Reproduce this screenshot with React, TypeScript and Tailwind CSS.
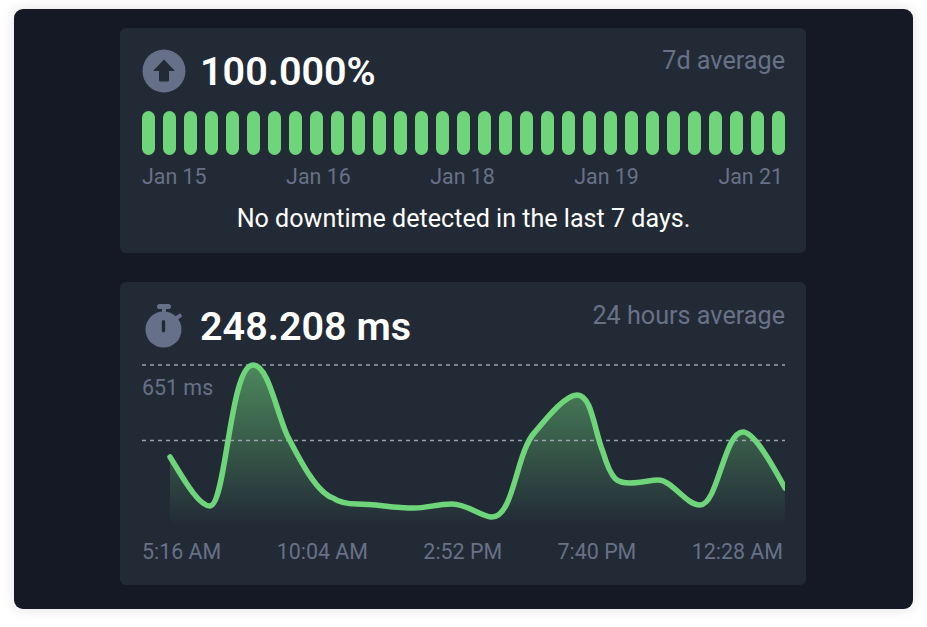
const bars = Array.from({ length: 31 }, (_, i) => i);
const days = ["Jan 15", "Jan 16", "Jan 18", "Jan 19", "Jan 21"];
const times = ["5:16 AM", "10:04 AM", "2:52 PM", "7:40 PM", "12:28 AM"];

// chart coordinates are page px minus (142, 360)
const line =
  "M28 97 C40 116 56 146 68 146 C84 146 88 5 111 5 C126 5 134 50 145 75 C158 100 174 132 191 138 C198 143 205 144 215 144 C235 144 250 148 272 148 C285 148 295 144 310 144 C325 144 340 157 350 157 C372 157 374 92 393 72 C408 54 424 35 435 35 C450 35 452 70 461 92 C470 122 476 123 488 123 C500 123 508 120 516 120 C530 120 544 145 558 145 C576 145 582 72 601 72 C612 72 630 104 643 128";
const area = `${line} L643 170 L28 170 Z`;

function UptimeIcon() {
  return (
    <svg width="44" height="44" viewBox="0 0 44 44" className="shrink-0">
      <circle cx="22" cy="22" r="21.5" fill="#667089" />
      <path d="M22 10.5 L33 22 H27 V31 Q27 32.5 25.5 32.5 H18.500 Q17 32.5 17 31 V22 H11 Z" fill="#222a36" />
    </svg>
  );
}

function StopwatchIcon() {
  return (
    <svg width="44" height="44" viewBox="0 0 44 44" className="shrink-0">
      <rect x="15" y="0" width="14" height="5" rx="2.500" fill="#667089" />
      <rect x="20" y="4" width="4" height="6" fill="#667089" />
      <rect x="33" y="11" width="7" height="4" rx="1.500" transform="rotate(-35 36 13)" fill="#667089" />
      <circle cx="21.500" cy="25.500" r="18" fill="#667089" />
      <rect x="19.800" y="16" width="3.400" height="12.500" rx="1.700" fill="#222a36" />
    </svg>
  );
}

export default function App() {
  return (
    <div className="h-[627px] w-[927px] overflow-hidden bg-white pl-[14px] pt-[9px] font-['Roboto',sans-serif]">
      <div className="flex h-[600px] w-[899px] flex-col items-center gap-[29px] rounded-[9px] bg-[#141925] pt-[19px] shadow-[0_0_14px_rgba(0,0,0,0.12)]">
        <section className="-ml-[1px] h-[225px] w-[686px] rounded-[6px] bg-[#222a36] pl-[22px] pr-[21px] pt-[21px]">
          <div className="flex h-[44px] items-center justify-between">
            <div className="flex items-center gap-[14px]">
              <UptimeIcon />
              <span className="mt-[2px] text-[39.500px] font-semibold leading-[44px] text-white">100.000%</span>
            </div>
            <span className="-mt-[20px] text-[25.200px] leading-[28px] text-[#687186]">7d average</span>
          </div>
          <div className="mt-[18px] flex h-[44px] justify-between">
            {bars.map((b) => (
              <div key={b} className="h-full w-[13px] rounded-[6.5px] bg-[#6fd57a]" />
            ))}
          </div>
          <div className="mt-[9px] flex justify-between pr-[2px] text-[21.400px] leading-[26px] text-[#687186]">
            {days.map((d) => (
              <span key={d}>{d}</span>
            ))}
          </div>
          <p className="mt-[14px] text-center text-[25.100px] leading-[30px] text-white">
            No downtime detected in the last 7 days.
          </p>
        </section>

        <section className="-ml-[1px] h-[303px] w-[686px] rounded-[6px] bg-[#222a36] pl-[22px] pr-[21px] pt-[22px]">
          <div className="flex h-[44px] items-center justify-between">
            <div className="flex items-center gap-[14px]">
              <StopwatchIcon />
              <span className="mt-[2px] text-[39.500px] font-semibold leading-[44px] text-white">248.208 ms</span>
            </div>
            <span className="-mt-[20px] text-[25.200px] leading-[28px] text-[#687186]">24 hours average</span>
          </div>
          <div className="relative mt-[12px] h-[170px] w-[643px]">
            <svg width="643" height="170" viewBox="0 0 643 170" fill="none" className="block">
              <defs>
                <linearGradient id="fade" x1="0" y1="5" x2="0" y2="166" gradientUnits="userSpaceOnUse">
                  <stop offset="0" stopColor="#6fd57a" stopOpacity="0.55" />
                  <stop offset="1" stopColor="#6fd57a" stopOpacity="0" />
                </linearGradient>
              </defs>
              <path d={area} fill="url(#fade)" />
              <path d="M0 5 H643 M0 80.500 H643" stroke="#9aa0ad" strokeWidth="1.500" strokeDasharray="4 4" />
              <path d={line} stroke="#6fd57a" strokeWidth="5.500" strokeLinecap="round" strokeLinejoin="round" />
            </svg>
            <span className="absolute left-0 top-[15px] text-[21.400px] leading-[26px] text-[#687186]">651 ms</span>
          </div>
          <div className="mt-[9px] flex justify-between pr-[2px] text-[21.400px] leading-[26px] text-[#687186]">
            {times.map((t) => (
              <span key={t}>{t}</span>
            ))}
          </div>
        </section>
      </div>
    </div>
  );
}
